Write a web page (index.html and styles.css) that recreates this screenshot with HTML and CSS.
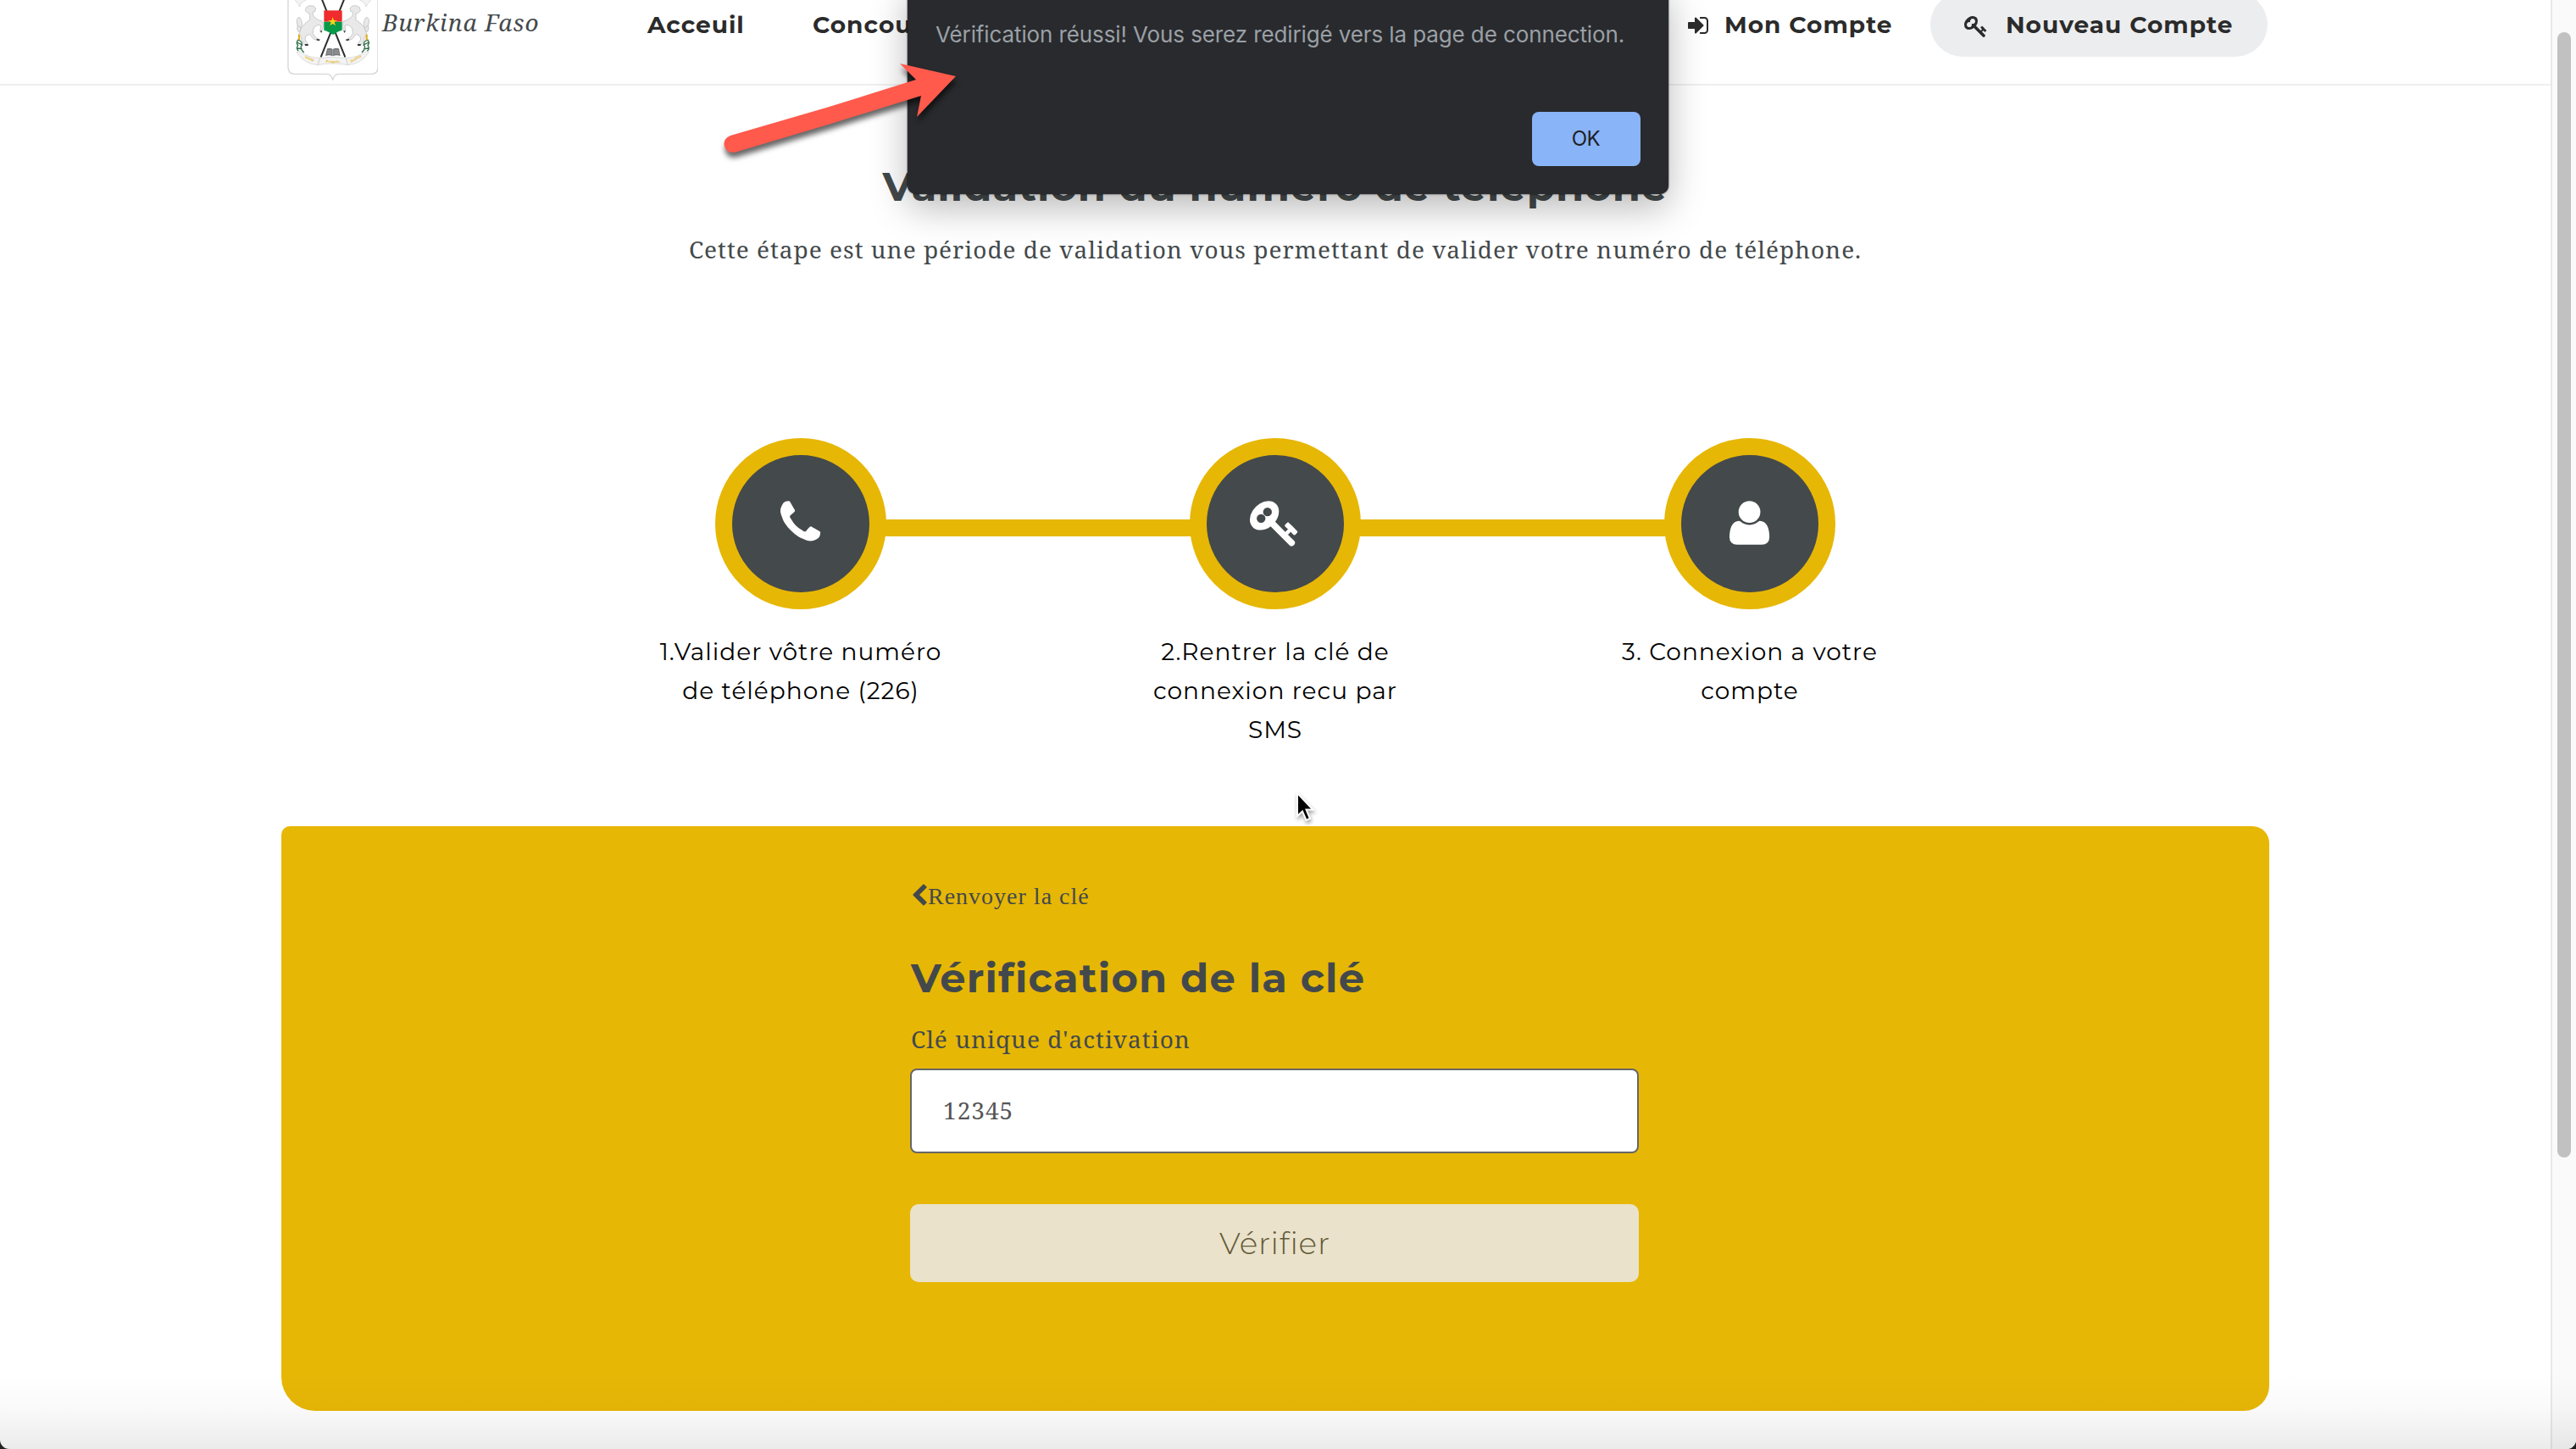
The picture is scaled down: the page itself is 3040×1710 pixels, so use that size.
FILE: index.html
```html
<!DOCTYPE html>
<html lang="fr">
<head>
<meta charset="utf-8">
<title>Validation du numéro de téléphone</title>
<link rel="stylesheet" href="styles.css">
</head>
<body>
<div class="window">
  <div class="page">
    <header class="header">
      <svg class="emblem" viewBox="57 0 321 285">
        <path class="emblem-shield" d="M60 -10V238Q60 262 84 262H196Q214 262 218 284Q222 262 240 262H354Q378 262 378 238V-10"/>
        <path class="emblem-ribbon" d="M84 0L96 14 101 24 107 9 124 0M353 0L341 14 336 24 330 9 313 0"/>
        <path class="emblem-spear" d="M179 -4L262 202M259 -4L176 202"/>
        <g id="horse">
          <path class="emblem-horse" d="M121 38L124 26 135 20 150 21 158 30 155 41 147 43 150 58 166 70 182 76 185 92 179 112 173 112 176 91 164 88 151 98 147 118 158 133 171 140 169 144 151 139 136 121 122 128 120 141 130 155 129 161 119 160 108 142 107 130 98 122 107 97 119 84 137 70 137 48 130 46Z"/>
          <path class="emblem-horse" d="M105 98Q88 92 91 70Q99 52 106 70Q113 82 105 102Q102 116 96 112Q89 104 94 88"/>
          <path class="emblem-hoof" d="M119 156L131 156 131 162 121 162ZM162 137L173 140 170 145 160 142ZM174 108L181 110 177 117Z"/>
          <path class="emblem-leaf" d="M96 140Q86 152 95 160Q86 172 98 182M96 142Q112 146 108 160Q100 170 116 186M92 150L112 160M90 170L110 174"/>
          <path class="emblem-millet" d="M99 122V142"/>
        </g>
        <use href="#horse" transform="matrix(-1 0 0 1 437 0)"/>
        <path fill="#ef2b2d" d="M187 37H251V77H187Z"/>
        <path fill="#089a48" d="M187 77H251V107Q238 110 219 123Q200 110 187 107Z"/>
        <path fill="#fcd116" d="M218 60L222 72 234 72 224 79 228 91 218 84 208 91 212 79 202 72 214 72Z"/>
        <path fill="#77797b" d="M198 172Q208 168 218 174Q229 168 240 172L245 198Q230 193 218 199Q206 193 192 198Z"/>
        <path class="emblem-book" d="M218 174V198M200 180L213 180M223 180L238 180M199 188L213 188M223 188L240 188"/>
        <path class="emblem-ribbon" d="M98 180Q132 206 174 205L166 230Q120 228 90 186ZM338 180Q304 206 264 205L270 230Q316 228 346 186ZM172 206Q218 198 266 206L272 230Q218 220 164 230Z"/>
        <text class="emblem-text" x="136" y="212" transform="rotate(25 136 208)">Unité</text>
        <text class="emblem-text" x="219" y="223">Progrès</text>
        <text class="emblem-text" x="299" y="212" transform="rotate(-28 299 208)">Justice</text>
      </svg>
      <span class="brand">Burkina Faso</span>
      <a class="nav-link">Acceuil</a>
      <a class="nav-link">Concours</a>
      <a class="nav-link nav-account">
        <svg class="nav-icon nav-icon-login" viewBox="0 0 1664 1792"><path d="M1184 832q0 26-19 45l-544 544q-19 19-45 19t-45-19-19-45v-288h-448q-26 0-45-19t-19-45v-384q0-26 19-45t45-19h448v-288q0-26 19-45t45-19 45 19l544 544q19 19 19 45zm352-352v704q0 119-84.5 203.5t-203.5 84.5h-320q-13 0-22.5-9.5t-9.5-22.5q0-4-1-20t-.5-26.5 3-23.5 10-19.5 20.5-6.5h320q66 0 113-47t47-113v-704q0-66-47-113t-113-47h-312l-11.5-1-11.5-3-8-5.5-7-9-2-13.5q0-4-1-20t-.5-26.5 3-23.5 10-19.5 20.5-6.5h320q119 0 203.5 84.5t84.5 203.5z"/></svg>
        <span>Mon Compte</span>
      </a>
      <a class="nav-link nav-pill">
        <svg class="nav-icon" viewBox="0 0 1792 1792"><path d="M832 512q0-80-56-136t-136-56-136 56-56 136q0 42 19 83-41-19-83-19-80 0-136 56t-56 136 56 136 136 56 136-56 56-136q0-42-19-83 41 19 83 19 80 0 136-56t56-136zm851 704q0 17-49 66t-66 49q-9 0-28.5-16t-36.5-33-38.5-40-24.5-26l-96 96 220 220q28 28 28 68 0 42-39 81t-81 39q-40 0-68-28l-671-671q-176 131-365 131-163 0-265.5-102.5t-102.5-265.5q0-160 95-313t248-248 313-95q163 0 265.5 102.5t102.5 265.5q0 189-131 365l355 355 96-96q-3-3-26-24.5t-40-38.5-33-36.5-16-28.5q0-17 49-66t66-49q13 0 23 10 6 6 46 44.5t82 79.5 86.5 86 73 78 28.5 41z"/></svg>
        <span>Nouveau Compte</span>
      </a>
    </header>

    <main class="main">
      <h1 class="title">Validation du numéro de téléphone</h1>
      <p class="subtitle">Cette étape est une période de validation vous permettant de valider votre numéro de téléphone.</p>

      <ol class="steps">
        <li class="step">
          <div class="step-head">
            <div></div>
            <div class="step-circle"><svg class="step-icon" viewBox="0 0 1408 1792"><path d="M1408 1240q0 27-10 70.5t-21 68.5q-21 50-122 106-94 51-186 51-27 0-53-3.5t-57.5-12.5-47-14.5-55.5-20.5-49-18q-98-35-175-83-127-79-264-216t-216-264q-48-77-83-175-3-9-18-49t-20.5-55.5-14.5-47-12.5-57.5-3.5-53q0-92 51-186 56-101 106-122 25-11 68.5-21t70.5-10q14 0 21 3 18 6 53 76 11 19 30 54t35 63.5 31 53.5q3 4 17.5 25t21.5 35.5 7 28.5q0 20-28.5 50t-62 55-62 53-28.5 46q0 9 5 22.5t8.5 20.5 14 24 11.5 19q76 137 174 235t235 174q2 1 19 11.5t24 14 20.5 8.5 22.5 5q18 0 46-28.5t53-62 55-62 50-28.5q14 0 28.5 7t35.5 21.5 25 17.5q25 15 53.5 31t63.5 35 54 30q70 35 76 53 3 7 3 21z"/></svg></div>
            <div class="step-bar"></div>
          </div>
          <p class="step-text">1.Valider vôtre numéro de téléphone (226)</p>
        </li>
        <li class="step">
          <div class="step-head">
            <div class="step-bar"></div>
            <div class="step-circle"><svg class="step-icon" viewBox="0 0 1792 1792"><path fill-rule="evenodd" d="M1683 1216q0 17-49 66t-66 49q-9 0-28.5-16t-36.5-33-38.5-40-24.5-26l-96 96 220 220q28 28 28 68 0 42-39 81t-81 39q-40 0-68-28l-671-671q-176 131-365 131-163 0-265.5-102.5t-102.5-265.5q0-160 95-313t248-248 313-95q163 0 265.5 102.5t102.5 265.5q0 189-131 365l355 355 96-96q-3-3-26-24.5t-40-38.5-33-36.5-16-28.5q0-17 49-66t66-49q13 0 23 10 6 6 46 44.5t82 79.5 86.5 86 73 78 28.5 41zM466 512a155 155 0 1 0 310 0a155 155 0 1 0-310 0zM240 742a155 155 0 1 0 310 0a155 155 0 1 0-310 0z"/></svg></div>
            <div class="step-bar"></div>
          </div>
          <p class="step-text">2.Rentrer la clé de connexion recu par SMS</p>
        </li>
        <li class="step">
          <div class="step-head">
            <div class="step-bar"></div>
            <div class="step-circle"><svg class="step-icon" viewBox="0 0 1408 1792"><path d="M1408 1405q0 120-73 189.5t-194 69.5h-874q-121 0-194-69.5T0 1405q0-53 3.5-103.5t14-109T44 1084t43-97.5 62-81 85.5-53.5T346 832q9 0 42 21.5t74.5 48 108 48T704 971t133.5-21.5 108-48 74.5-48 42-21.5q61 0 111.5 20t85.5 53.5 62 81 43 97.5 26.5 108.5 14 109 3.5 103.5zm-320-893q0 159-112.5 271.5T704 896 432.5 783.5 320 512t112.5-271.5T704 128t271.5 112.5T1088 512z"/></svg></div>
            <div></div>
          </div>
          <p class="step-text">3. Connexion a votre compte</p>
        </li>
      </ol>

      <form class="card">
        <a class="resend">
          <svg class="resend-icon" viewBox="0 0 1280 1792"><path d="M1171 301l-531 531 531 531q19 19 19 45t-19 45l-166 166q-19 19-45 19t-45-19l-742-742q-19-19-19-45t19-45l742-742q19-19 45-19t45 19l166 166q19 19 19 45t-19 45z"/></svg>
          <span>Renvoyer la clé</span>
        </a>
        <h2 class="card-title">Vérification de la clé</h2>
        <label class="label" for="key">Clé unique d'activation</label>
        <input class="input" id="key" type="text" value="12345">
        <button class="submit" type="button">Vérifier</button>
      </form>
    </main>
  </div>
  <div class="scrollbar"><div class="scrollbar-thumb"></div></div>
  <div class="bottom-shade"></div>
</div>

<div class="dialog" role="alertdialog">
  <p class="dialog-text">Vérification réussi! Vous serez redirigé vers la page de connection.</p>
  <button class="dialog-ok" type="button">OK</button>
</div>

<svg class="arrow" viewBox="840 60 310 140"><path d="M862 160L977 126.500 1081 94 1062 75 1128 90 1082 138 1087 113 979 146.500 870 179Q860 182 856 175Q851 165 862 160Z"/></svg>
<svg class="cursor" viewBox="0 0 24 38"><path d="M2 2V29L8 23.500 12.500 34 17 32 12.500 21.500H20.500Z"/></svg>
</body>
</html>
```
FILE: styles.css
```css
* { box-sizing: border-box; }

body {
  margin: 0;
  height: 1710px;
  overflow: hidden;
  position: relative;
  background: #222;
  color: #43494b;
  font: 28px/46px "Noto Serif", "Liberation Serif", serif;
  letter-spacing: 1px;
}

h1, h2, p, ol { margin: 0; padding: 0; }

.window {
  position: relative;
  display: flex;
  height: 1710px;
  overflow: hidden;
  background: #fff;
  border-radius: 0 0 11px 11px;
}

.page { width: 3010px; }

/* Header */
.header {
  display: grid;
  grid-template-columns: 112px 313px 195px 1033px 286px 398px;
  align-items: start;
  height: 101px;
  padding-left: 339px;
  border-bottom: 2px solid #efefef;
}

.emblem { width: 107px; height: 95px; }
.emblem path { stroke-linejoin: round; }
.emblem-shield { fill: #fff; stroke: #d6d6d6; stroke-width: 4; }
.emblem-ribbon { fill: #f3f3f3; stroke: #cfcfcf; stroke-width: 2; }
.emblem-spear { fill: none; stroke: #2e2e2e; stroke-width: 6; }
.emblem-horse { fill: #e9e9e9; stroke: #b5b5b5; stroke-width: 2; }
.emblem-hoof { fill: #333; }
.emblem-leaf { fill: none; stroke: #2f6b4a; stroke-width: 4; }
.emblem-millet { stroke: #dfb12c; stroke-width: 7; }
.emblem-book { fill: none; stroke: #c4c4c4; stroke-width: 2; }
.emblem-text {
  fill: #e8b923;
  font: 700 13px "Liberation Sans", sans-serif;
  letter-spacing: 0;
  text-anchor: middle;
}

.brand {
  margin-top: -12px;
  line-height: 76px;
  font-style: italic;
}

.nav-link {
  display: flex;
  align-items: center;
  height: 76px;
  margin-top: -9px;
  color: #2b2b2b;
  font-family: Montserrat, Inter, sans-serif;
  font-weight: 700;
}

.nav-account { gap: 17px; }
.nav-pill {
  gap: 21px;
  padding-left: 40px;
  border-radius: 38px;
  background: #ecedef;
}

.nav-icon { width: 28px; height: 28px; margin-top: 3px; fill: currentColor; }
.nav-icon-login { width: 26px; }

/* Introduction */
.main {
  display: flex;
  flex-direction: column;
  align-items: center;
}

.title,
.card-title {
  font: 700 48px/58px Montserrat, Inter, sans-serif;
}

.title { margin-top: 90px; }
.subtitle { margin-top: 22px; }

/* Steps */
.steps {
  display: grid;
  grid-template-columns: repeat(3, 560px);
  margin-top: 200px;
  list-style: none;
}

.step { display: flex; flex-direction: column; align-items: center; }

.step-head {
  display: grid;
  grid-template-columns: 1fr 202px 1fr;
  align-items: center;
  align-self: stretch;
}

.step-bar { height: 20px; margin: 10px -3px 0; background: #e7b706; }
.step-bar:first-child { margin-left: 0; }
.step-bar:last-child { margin-right: 0; }

.step-circle {
  display: flex;
  align-items: center;
  justify-content: center;
  height: 202px;
  padding-bottom: 3px;
  border: 20px solid #e7b706;
  border-radius: 50%;
  background: #44494b;
}

.step-icon { height: 60px; fill: #fff; }

.step-text {
  width: 340px;
  margin-top: 27px;
  color: #000;
  font-family: Montserrat, Inter, sans-serif;
  text-align: center;
}

/* Key form */
.card {
  display: flex;
  flex-direction: column;
  width: 2346px;
  height: 690px;
  margin-top: 91px;
  padding: 66px 744px 0 742px;
  border-radius: 10px 20px 30px 40px;
  background: #e7b706;
}

.resend {
  display: flex;
  align-items: flex-start;
  padding-left: 1px;
  font: 28px/34px "Liberation Serif", serif;
}

.resend-icon { width: 20px; height: 28px; margin-top: 2px; fill: currentColor; }

.card-title {
  margin-top: 50px;
  padding-left: 1px;
  letter-spacing: 1.15px;
}

.label { margin-top: 20px; padding-left: 1px; }

.input {
  height: 100px;
  margin-top: 12px;
  padding: 0 37px 2px;
  border: 2px solid #666;
  border-radius: 8px;
  background: #fff;
  color: #555;
  font: inherit;
  letter-spacing: 1px;
}

.submit {
  height: 92px;
  margin-top: 60px;
  padding: 0 0 1px 1px;
  border: 0;
  border-radius: 10px;
  background: #eae2ca;
  color: #625a3a;
  font: 300 36px Montserrat, Inter, sans-serif;
  letter-spacing: .8px;
}

/* Scrollbar */
.scrollbar {
  flex: 1;
  padding: 38px 0 0 6px;
  border-left: 2px solid #e8e8e8;
  background: #fafafa;
}

.scrollbar-thumb {
  width: 16px;
  height: 1328px;
  border-radius: 8px;
  background: #c1c1c1;
}

.bottom-shade {
  position: absolute;
  inset: auto 0 0;
  height: 90px;
  background: linear-gradient(rgba(0, 0, 0, 0), rgba(0, 0, 0, .02) 45%, rgba(0, 0, 0, .08));
}

/* Dialog */
.dialog {
  position: absolute;
  top: -20px;
  left: 1071px;
  display: flex;
  flex-direction: column;
  width: 898px;
  height: 249px;
  padding: 41px 33px 32px 33px;
  border-radius: 0 0 10px 10px;
  background: #292a2d;
  box-shadow: 0 0 2px #000, 0 16px 44px rgba(0, 0, 0, .28);
}

.dialog-text {
  color: #9aa0a6;
  font: 26px/40px Inter, sans-serif;
  letter-spacing: -.11px;
  white-space: nowrap;
}

.dialog-ok {
  align-self: flex-end;
  width: 128px;
  height: 64px;
  margin-top: 71px;
  padding: 0 1px 2px 0;
  border: 0;
  border-radius: 8px;
  background: #8ab4f8;
  color: #202124;
  font: 24px Inter, sans-serif;
  letter-spacing: -.5px;
}

/* Pointer marks */
.arrow {
  position: absolute;
  top: 60px;
  left: 840px;
  width: 310px;
  height: 140px;
  fill: #ff5a4c;
  filter: drop-shadow(1px 6px 3px rgba(0, 0, 0, .6));
}

.cursor {
  position: absolute;
  top: 934px;
  left: 1529px;
  width: 24px;
  height: 38px;
  fill: #000;
  stroke: #fff;
  stroke-width: 2;
  filter: drop-shadow(1px 3px 2px rgba(0, 0, 0, .35));
}
```
